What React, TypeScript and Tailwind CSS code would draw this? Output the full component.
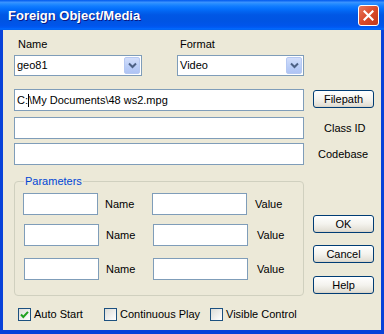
import React from 'react'

const font = "font-['Liberation_Sans',Arial,sans-serif]"

function ComboBox({ value, width }: { value: string; width: string }) {
  return (
    <div className={`${width} h-[21px] flex items-stretch border border-[#7F9DB9] bg-white p-[1px]`}>
      <span className="flex-1 flex items-center pl-[1px] text-black">{value}</span>
      <span className="w-[16px] flex items-center justify-center rounded-[2px] border border-[#B5C8F2] bg-[linear-gradient(to_bottom,#D2DEFB,#B9CDF7_60%,#AFC4F4)]">
        <svg width="9" height="7" viewBox="0 0 9 7">
          <path d="M1 1.5 L4.5 5 L8 1.5" fill="none" stroke="#4D6185" strokeWidth="2" />
        </svg>
      </span>
    </div>
  )
}

function TextBox({ width, children, className = '' }: { width: string; children?: React.ReactNode; className?: string }) {
  return (
    <div className={`${width} h-[22px] border border-[#7F9DB9] bg-white flex items-center pl-[2px] ${className}`}>
      {children}
    </div>
  )
}

function XPButton({ label, className = '' }: { label: string; className?: string }) {
  return (
    <button className={`w-[61px] h-[18px] rounded-[3px] border border-[#003C74] bg-[linear-gradient(to_bottom,#FFFFFF,#F4F3EE_50%,#E3E0D6_90%,#D6D0C5)] text-black text-[11px] leading-none flex items-center justify-center ${className}`}>
      {label}
    </button>
  )
}

function CheckBox({ label, checked, width }: { label: string; checked?: boolean; width: string }) {
  return (
    <label className={`${width} flex items-center gap-[3px]`}>
      <span className="w-[13px] h-[13px] border border-[#1C5180] bg-[linear-gradient(135deg,#DCDCD7,#FFFFFF)] flex items-center justify-center">
        {checked && (
          <svg width="9" height="9" viewBox="0 0 9 9">
            <path d="M1 4.5 L3.3 7 L8 1.8" fill="none" stroke="#21A121" strokeWidth="2" />
          </svg>
        )}
      </span>
      <span>{label}</span>
    </label>
  )
}

function ParamRow({ shift, className = '' }: { shift?: boolean; className?: string }) {
  return (
    <div className={`flex items-center ${shift ? 'pl-[1px]' : ''} ${className}`}>
      <TextBox width="w-[75px]" />
      <span className="w-[54px] pl-[7px]">Name</span>
      <TextBox width="w-[95px]" />
      <span className={shift ? 'pl-[9px]' : 'pl-[8px]'}>Value</span>
    </div>
  )
}

export default function App() {
  return (
    <div className={`w-[384px] h-[334px] flex flex-col bg-[#0842D9] text-[11px] text-black ${font}`}>
      {/* Title bar */}
      <div className="h-[30px] flex items-center pl-[8px] pr-[5px] bg-[linear-gradient(to_bottom,#0058EE_0%,#3A93FF_8%,#288EFF_12%,#127DFF_20%,#036FFC_30%,#0262EE_40%,#0057E5_50%,#0054E3_70%,#0055EB_85%,#005BF5_92%,#026AFE_96%,#0062EF_100%)]">
        <span className="text-white font-bold text-[13px] pt-[2px] [text-shadow:1px_1px_#0A1882]">
          Foreign Object/Media
        </span>
        <span className="ml-auto w-[21px] h-[21px] rounded-[3px] border border-white bg-[linear-gradient(135deg,#E8775C,#D94A2A_50%,#C2381A)] flex items-center justify-center mt-[1px]">
          <svg width="11" height="11" viewBox="0 0 11 11">
            <path d="M1.5 1.5 L9.5 9.5 M9.5 1.5 L1.5 9.5" stroke="white" strokeWidth="2.2" strokeLinecap="square" />
          </svg>
        </span>
      </div>

      {/* Client area */}
      <div className="flex-1 mx-[3px] mb-[4px] bg-[#ECE9D8] pl-[11px] flex flex-col">
        {/* Labels */}
        <div className="flex h-[13px] mt-[8px] leading-[13px]">
          <span className="w-[163px] pl-[4px]">Name</span>
          <span className="pl-[3px]">Format</span>
        </div>

        {/* Combos */}
        <div className="flex mt-[4px] gap-[35px]">
          <ComboBox value="geo81" width="w-[128px]" />
          <ComboBox value="Video" width="w-[127px]" />
        </div>

        {/* File path */}
        <div className="flex items-start mt-[13px]">
          <TextBox width="w-[290px]">
            <span className="whitespace-pre flex items-center">
              C:<span className="inline-block w-[1px] h-[13px] bg-black" />\My Documents\48 ws2.mpg
            </span>
          </TextBox>
          <XPButton label="Filepath" className="ml-[9px] mt-[1px]" />
        </div>

        {/* Class ID */}
        <div className="flex items-center mt-[6px]">
          <TextBox width="w-[290px]" />
          <span className="ml-[20px]">Class ID</span>
        </div>

        {/* Codebase */}
        <div className="flex items-center mt-[4px]">
          <TextBox width="w-[290px]" />
          <span className="ml-[14px]">Codebase</span>
        </div>

        {/* Parameters + buttons */}
        <div className="flex items-start mt-[16px]">
          <div className="relative w-[290px] h-[115px] rounded-[4px] border border-[#D0D0BF] pl-[8px] pt-[11px]">
            <span className="absolute left-[9px] top-[-7px] px-[1px] bg-[#ECE9D8] text-[#0046D5] leading-[13px]">
              Parameters
            </span>
            <ParamRow />
            <ParamRow shift className="mt-[9px]" />
            <ParamRow shift className="mt-[12px]" />
          </div>
          <div className="flex flex-col ml-[9px] mt-[34px]">
            <XPButton label="OK" />
            <XPButton label="Cancel" className="mt-[12px]" />
            <XPButton label="Help" className="mt-[13px]" />
          </div>
        </div>

        {/* Checkboxes */}
        <div className="flex items-center mt-[10px] pl-[4px]">
          <CheckBox label="Auto Start" checked width="w-[86px]" />
          <CheckBox label="Continuous Play" width="w-[106px]" />
          <CheckBox label="Visible Control" width="w-[120px]" />
        </div>
      </div>
    </div>
  )
}
